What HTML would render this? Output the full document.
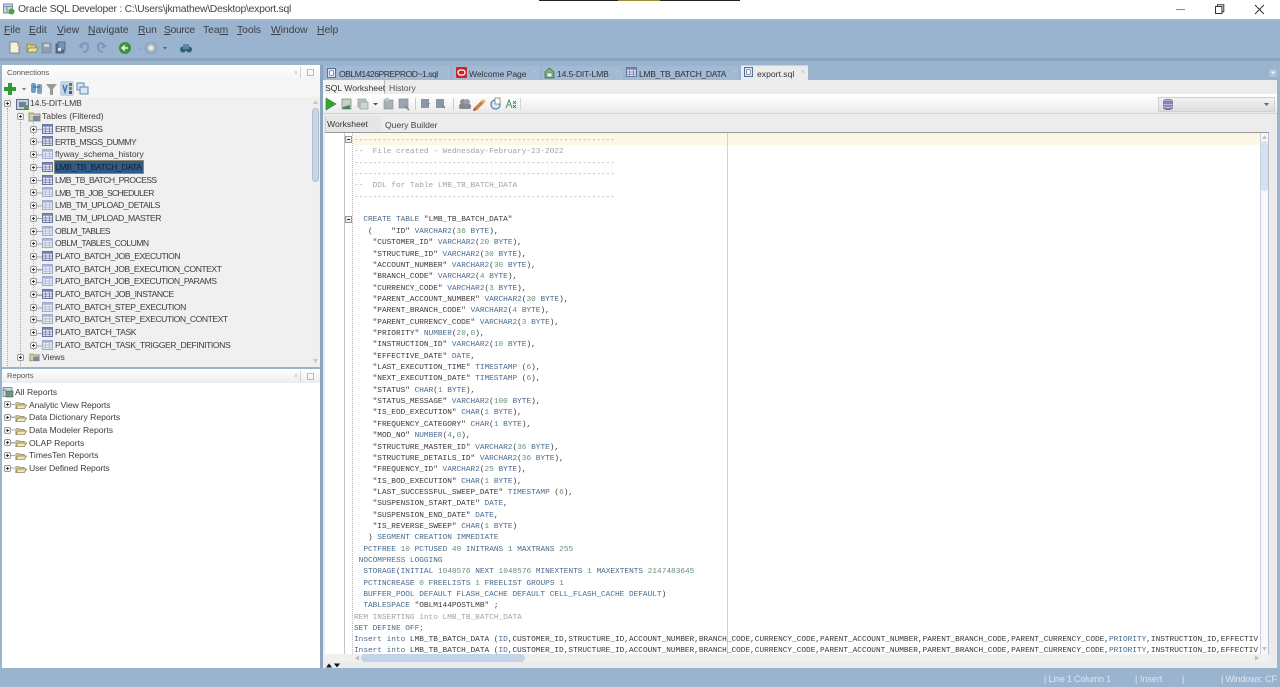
<!DOCTYPE html>
<html><head><meta charset="utf-8"><title>Oracle SQL Developer</title>
<style>
html,body{margin:0;padding:0}
body{width:1280px;height:687px;overflow:hidden;position:relative;background:#9ab3cf;font-family:"Liberation Sans",sans-serif;color:#333}
#w{position:absolute;left:0;top:0;width:1280px;height:687px;overflow:hidden;filter:blur(.3px)}
#w div,#w svg,#w span.a{position:absolute}
.t{white-space:pre;font-size:8.6px;line-height:12px;color:#3c3c3c}
.u{letter-spacing:-.48px}
.m{white-space:pre;font-size:10.3px;line-height:14px;top:24px;color:#3a3f47}
.tab{white-space:pre;font-size:8.6px;line-height:12px;top:68px;color:#333}
u{text-underline-offset:1px;text-decoration-thickness:1px}
.c{position:absolute;left:354px;margin-top:2px;white-space:pre;font:7.77px/11px "Liberation Mono",monospace;color:#383838;width:904px;overflow:hidden}
.k{color:#486a8e}.n{color:#5f8f78}.g{color:#a2a2a2}
</style></head><body><div id="w">
<svg width="0" height="0" style="left:0;top:0">
<defs>
<symbol id="tb" viewBox="0 0 12 11"><rect x=".5" y=".5" width="11" height="10" fill="#e5eaf4" stroke="#5d6c96"/><rect x="1" y="1" width="10" height="2" fill="#7684ad"/><path d="M1 5.500h10M1 8h10M4 3v7M8 3v7" stroke="#6d7ba6" stroke-width=".8"/></symbol>
<symbol id="tl" viewBox="0 0 12 11"><rect x=".5" y=".5" width="11" height="10" fill="#e9ecf6" stroke="#9aa5c6"/><rect x="1" y="1" width="10" height="2" fill="#aab4d2"/><path d="M1 5.500h10M1 8h10M4 3v7M8 3v7" stroke="#aab4d2" stroke-width=".8"/></symbol>
<symbol id="ex" viewBox="0 0 9 9"><rect x="1.500" y="1.500" width="6" height="6" rx="1.500" fill="#f4f4f4" stroke="#9a9a9a"/><path d="M3 4.500h3M4.500 3v3" stroke="#333" stroke-width=".9"/></symbol>
<symbol id="fo" viewBox="0 0 13 10"><path d="M1 9V2.500h3.500l1 1H10V9z" fill="#d9cfa0" stroke="#857c55" stroke-width=".8"/><path d="M1 9l2-4h9.500L10 9z" fill="#efe6bd" stroke="#857c55" stroke-width=".8"/></symbol>
<symbol id="sq" viewBox="0 0 10 11"><rect x=".5" y=".5" width="9" height="10" fill="#dfe6f2" stroke="#49648e"/><rect x="3" y="3" width="4" height="5" fill="#fff" stroke="#49648e" stroke-width=".7"/></symbol>
</defs></svg>

<!-- title bar -->
<div style="left:0;top:0;width:1280px;height:19px;background:#fff"></div>
<div style="left:539px;top:0;width:201px;height:1px;background:#222"></div>
<div style="left:618px;top:0;width:42px;height:1px;background:#a08a3a"></div>
<svg style="left:3px;top:3px" width="12" height="12" viewBox="0 0 12 12"><rect x=".5" y="1" width="9" height="9" fill="#c8d6e6" stroke="#7e8ea5"/><path d="M.5 3.500h9M4 3.500V10" stroke="#7e8ea5"/><circle cx="8.500" cy="8.500" r="3" fill="#4aa33c"/></svg>
<div style="left:18px;top:3px;white-space:pre;font-size:10.4px;line-height:14px;letter-spacing:-.27px;color:#444">Oracle SQL Developer : C:\Users\jkmathew\Desktop\export.sql</div>
<div style="left:1176px;top:9px;width:9px;height:1px;background:#888"></div>
<svg style="left:1214px;top:4px" width="11" height="11" viewBox="0 0 11 11" fill="none" stroke="#333"><rect x="1.500" y="2.500" width="6.500" height="7"/><path d="M3.500 2.500V.7h6.300v7H8"/></svg>
<svg style="left:1254px;top:4px" width="11" height="11" viewBox="0 0 11 11" fill="none" stroke="#333"><path d="M1 1l9 9M10 1l-9 9"/></svg>

<!-- main chrome -->
<div style="left:0;top:19px;width:1280px;height:1px;background:#a9b9ca"></div>
<div style="left:0;top:58px;width:1280px;height:3px;background:#8aa3bf"></div>
<div class="m" style="left:4px"><u>F</u>ile</div>
<div class="m" style="left:29px"><u>E</u>dit</div>
<div class="m" style="left:57px"><u>V</u>iew</div>
<div class="m" style="left:88px"><u>N</u>avigate</div>
<div class="m" style="left:138px"><u>R</u>un</div>
<div class="m" style="left:164px;letter-spacing:-.3px"><u>S</u>ource</div>
<div class="m" style="left:203px">Tea<u>m</u></div>
<div class="m" style="left:237px"><u>T</u>ools</div>
<div class="m" style="left:271px"><u>W</u>indow</div>
<div class="m" style="left:317px"><u>H</u>elp</div>

<!-- main toolbar -->
<svg style="left:8px;top:41px" width="190" height="14" viewBox="0 0 190 14">
<path d="M2 1h7l2 2v9H2z" fill="#f4f1e2" stroke="#77706a" stroke-width=".8"/><path d="M9 1l1 2 2-1-1 2 1 1-3 0z" fill="#e8b820"/>
<path d="M19 11V3h3l1 1h5v7z" fill="#d8c878" stroke="#8b7d3e" stroke-width=".8"/><path d="M19 11l2-4h9l-2 4z" fill="#ecdf9a" stroke="#8b7d3e" stroke-width=".8"/>
<rect x="34" y="2" width="9" height="10" fill="#8f9db0" stroke="#7d8a9e" stroke-width=".8"/><rect x="36" y="3" width="5" height="3" fill="#c9d1dc"/>
<rect x="48" y="3" width="8" height="9" fill="#5d6f95" stroke="#46557a" stroke-width=".8"/><rect x="50" y="1" width="7" height="8" fill="#7d8fb3" stroke="#4e5e85" stroke-width=".8"/><rect x="50" y="7" width="3" height="3" fill="#dfe5ef"/>
<path d="M73 4c3-3 7-2 7 2s-3 5-5 5M75 3l-3 2 3 2" fill="none" stroke="#8097b3" stroke-width="2"/>
<path d="M96 4c-3-3-6-2-6 2s3 5 5 5M94 3l3 2-3 2" fill="none" stroke="#8097b3" stroke-width="2"/>
<circle cx="117" cy="7" r="5.500" fill="#3d9a3a" stroke="#2e6e2c" stroke-width=".6"/><path d="M120 7h-5M117 4.500l-3 2.500 3 2.500" stroke="#e8f5e4" stroke-width="1.500" fill="none"/>
<path d="M129 6.500h4l-2 2.500z" fill="#8aa3bf"/>
<circle cx="143" cy="7" r="5.500" fill="#aab6c3" stroke="#7f8c9c" stroke-width=".6"/><circle cx="143" cy="7" r="2.500" fill="#e7ecf1"/>
<path d="M155 6h4l-2 2.500z" fill="#4d5f78"/>
<circle cx="175" cy="8.500" r="3" fill="#2f5f7d"/><circle cx="181" cy="8.500" r="3" fill="#2f5f7d"/><rect x="175" y="3" width="6" height="5" fill="#5d8aa3"/>
</svg>

<!-- panel separator -->
<div style="left:320px;top:65px;width:3px;height:603px;background:#8ea4be"></div>

<!-- Connections panel -->
<div style="left:2px;top:65px;width:318px;height:302px;background:#f0f0f0"></div>
<div style="left:2px;top:65px;width:318px;height:15px;background:linear-gradient(#fff,#f4f4f4)"></div>
<div style="left:2px;top:80px;width:318px;height:17px;background:#f6f6f6"></div>
<div class="t" style="left:7px;top:67px;font-size:7.6px;color:#555">Connections</div>
<div style="left:294px;top:70px;font-size:7px;line-height:7px;color:#b8b8b8">×</div>
<div style="left:300px;top:67px;width:1px;height:11px;background:#d0d0d0"></div>
<div style="left:307px;top:69px;width:7px;height:7px;border:1px solid #bcbcbc;box-sizing:border-box"></div>
<svg style="left:4px;top:81px" width="86" height="15" viewBox="0 0 86 15">
<path d="M4 2h4v4h4v4H8v4H4v-4H0V6h4z" fill="#2f9a2f"/>
<path d="M18 7h4l-2 2.500z" fill="#777"/>
<rect x="27" y="2" width="5" height="10" rx="2" fill="#6e9ec7"/><rect x="33" y="3" width="5" height="10" rx="2" fill="#78a3c4"/><path d="M29 6h7" stroke="#2c6a8f"/>
<path d="M42 3h11l-4 5v6h-3V8z" fill="#9a9a9a"/>
<rect x="56" y="0" width="14" height="15" rx="2" fill="#c4d4e6"/><path d="M59 4l2 7 2-7" fill="none" stroke="#3b77b5" stroke-width="1.400"/><rect x="65" y="2" width="3" height="3" fill="#3c8a3c"/><rect x="65" y="6" width="3" height="3" fill="#a8762f"/><rect x="65" y="10" width="3" height="3" fill="#555"/>
<rect x="73" y="2" width="7" height="7" fill="#dbe6f3" stroke="#5a86b8"/><rect x="76" y="6" width="8" height="7" fill="#dbe6f3" stroke="#5a86b8"/>
</svg>

<!-- tree -->
<div style="left:7px;top:108px;width:0;height:258px;border-left:1px dotted #a8a8a8"></div>
<div style="left:20px;top:122px;width:0;height:244px;border-left:1px dotted #a8a8a8"></div>
<div style="left:33px;top:122px;width:0;height:228px;border-left:1px dotted #b8b8b8"></div>
<div style="left:37px;top:129px;width:5px;height:218px;background:repeating-linear-gradient(#a8a8a8 0 1px,transparent 1px 12.75px)"></div>
<svg style="left:3px;top:99px" width="9" height="9"><use href="#ex"/></svg>
<svg style="left:16px;top:99px" width="14" height="11" viewBox="0 0 14 11"><rect x=".5" y=".5" width="12" height="10" fill="#c4cee0" stroke="#606f8e"/><rect x="3" y="3" width="7" height="5" fill="#6d7f9f"/><rect x="8" y="6" width="5" height="4" fill="#5f9a5f"/></svg>
<div class="t" style="left:30px;top:97px;letter-spacing:-.15px">14.5-DIT-LMB</div>
<svg style="left:16px;top:112px" width="9" height="9"><use href="#ex"/></svg>
<svg style="left:28px;top:111px" width="13" height="11" viewBox="0 0 13 11"><path d="M1 10V2h4l1 1h6v7z" fill="#d8cfa5" stroke="#827a5a" stroke-width=".8"/><rect x="5" y="5" width="7" height="5" fill="#7c88a8"/></svg>
<div class="t" style="left:42px;top:110px">Tables (Filtered)</div>

<div style="left:55px;top:161px;width:88px;height:12px;background:#2f5b88;outline:1px solid #8a8a6e"></div>

<svg style="left:29px;top:125px" width="9" height="9"><use href="#ex"/></svg><svg style="left:42px;top:124px" width="11" height="10"><use href="#tb"/></svg><div class="t u" style="left:55px;top:123px;letter-spacing:-.62px">ERTB_MSGS</div>
<svg style="left:29px;top:137px" width="9" height="9"><use href="#ex"/></svg><svg style="left:42px;top:136px" width="11" height="10"><use href="#tb"/></svg><div class="t u" style="left:55px;top:136px;letter-spacing:-.6px">ERTB_MSGS_DUMMY</div>
<svg style="left:29px;top:150px" width="9" height="9"><use href="#ex"/></svg><svg style="left:42px;top:149px" width="11" height="10"><use href="#tl"/></svg><div class="t" style="left:55px;top:148px">flyway_schema_history</div>
<svg style="left:29px;top:163px" width="9" height="9"><use href="#ex"/></svg><svg style="left:42px;top:162px" width="11" height="10"><use href="#tb"/></svg><div class="t u" style="left:55px;top:161px;color:#16202c;letter-spacing:-.38px">LMB_TB_BATCH_DATA</div>
<svg style="left:29px;top:176px" width="9" height="9"><use href="#ex"/></svg><svg style="left:42px;top:175px" width="11" height="10"><use href="#tb"/></svg><div class="t u" style="left:55px;top:174px;letter-spacing:-.6px">LMB_TB_BATCH_PROCESS</div>
<svg style="left:29px;top:188px" width="9" height="9"><use href="#ex"/></svg><svg style="left:42px;top:187px" width="11" height="10"><use href="#tl"/></svg><div class="t u" style="left:55px;top:187px;letter-spacing:-.7px">LMB_TB_JOB_SCHEDULER</div>
<svg style="left:29px;top:201px" width="9" height="9"><use href="#ex"/></svg><svg style="left:42px;top:200px" width="11" height="10"><use href="#tl"/></svg><div class="t u" style="left:55px;top:199px">LMB_TM_UPLOAD_DETAILS</div>
<svg style="left:29px;top:214px" width="9" height="9"><use href="#ex"/></svg><svg style="left:42px;top:213px" width="11" height="10"><use href="#tb"/></svg><div class="t u" style="left:55px;top:212px">LMB_TM_UPLOAD_MASTER</div>
<svg style="left:29px;top:227px" width="9" height="9"><use href="#ex"/></svg><svg style="left:42px;top:226px" width="11" height="10"><use href="#tl"/></svg><div class="t u" style="left:55px;top:225px;letter-spacing:-.6px">OBLM_TABLES</div>
<svg style="left:29px;top:239px" width="9" height="9"><use href="#ex"/></svg><svg style="left:42px;top:238px" width="11" height="10"><use href="#tl"/></svg><div class="t u" style="left:55px;top:237px;letter-spacing:-.55px">OBLM_TABLES_COLUMN</div>
<svg style="left:29px;top:252px" width="9" height="9"><use href="#ex"/></svg><svg style="left:42px;top:251px" width="11" height="10"><use href="#tb"/></svg><div class="t u" style="left:55px;top:250px">PLATO_BATCH_JOB_EXECUTION</div>
<svg style="left:29px;top:265px" width="9" height="9"><use href="#ex"/></svg><svg style="left:42px;top:264px" width="11" height="10"><use href="#tl"/></svg><div class="t u" style="left:55px;top:263px;letter-spacing:-.5px">PLATO_BATCH_JOB_EXECUTION_CONTEXT</div>
<svg style="left:29px;top:277px" width="9" height="9"><use href="#ex"/></svg><svg style="left:42px;top:276px" width="11" height="10"><use href="#tl"/></svg><div class="t u" style="left:55px;top:275px;letter-spacing:-.5px">PLATO_BATCH_JOB_EXECUTION_PARAMS</div>
<svg style="left:29px;top:290px" width="9" height="9"><use href="#ex"/></svg><svg style="left:42px;top:289px" width="11" height="10"><use href="#tb"/></svg><div class="t u" style="left:55px;top:288px;letter-spacing:-.46px">PLATO_BATCH_JOB_INSTANCE</div>
<svg style="left:29px;top:303px" width="9" height="9"><use href="#ex"/></svg><svg style="left:42px;top:302px" width="11" height="10"><use href="#tl"/></svg><div class="t u" style="left:55px;top:301px;letter-spacing:-.46px">PLATO_BATCH_STEP_EXECUTION</div>
<svg style="left:29px;top:315px" width="9" height="9"><use href="#ex"/></svg><svg style="left:42px;top:314px" width="11" height="10"><use href="#tl"/></svg><div class="t u" style="left:55px;top:313px;letter-spacing:-.47px">PLATO_BATCH_STEP_EXECUTION_CONTEXT</div>
<svg style="left:29px;top:328px" width="9" height="9"><use href="#ex"/></svg><svg style="left:42px;top:327px" width="11" height="10"><use href="#tb"/></svg><div class="t u" style="left:55px;top:326px;letter-spacing:-.38px">PLATO_BATCH_TASK</div>
<svg style="left:29px;top:341px" width="9" height="9"><use href="#ex"/></svg><svg style="left:42px;top:340px" width="11" height="10"><use href="#tl"/></svg><div class="t u" style="left:55px;top:339px;letter-spacing:-.42px">PLATO_BATCH_TASK_TRIGGER_DEFINITIONS</div>
<svg style="left:16px;top:353px" width="9" height="9"><use href="#ex"/></svg><svg style="left:29px;top:352px" width="11" height="10" viewBox="0 0 13 11"><path d="M1 10V2h4l1 1h6v7z" fill="#d8cfa5" stroke="#827a5a" stroke-width=".8"/><rect x="5" y="5" width="7" height="5" fill="#7c88a8"/></svg><div class="t" style="left:42px;top:351px">Views</div>

<!-- conn scrollbar -->
<div style="left:311px;top:97px;width:9px;height:269px;background:#efefef"></div>
<div style="left:312px;top:108px;width:7px;height:74px;background:#c6d6e7;border-radius:4px;border:1px solid #aebfd2;box-sizing:border-box"></div>
<svg style="left:312px;top:99px" width="7" height="6"><path d="M1 5l2.500-4L6 5z" fill="#c4c4c4"/></svg>
<svg style="left:312px;top:358px" width="7" height="6"><path d="M1 1l2.500 4L6 1z" fill="#c4c4c4"/></svg>

<!-- Reports panel -->
<div style="left:2px;top:369px;width:318px;height:299px;background:#fff"></div>
<div style="left:2px;top:369px;width:318px;height:14px;background:linear-gradient(#fff,#ececec)"></div>
<div class="t" style="left:7px;top:370px;font-size:7.6px;color:#555">Reports</div>
<div style="left:294px;top:373px;font-size:7px;line-height:7px;color:#b8b8b8">×</div>
<div style="left:300px;top:371px;width:1px;height:11px;background:#d0d0d0"></div>
<div style="left:307px;top:373px;width:7px;height:7px;border:1px solid #bcbcbc;box-sizing:border-box"></div>
<svg style="left:2px;top:386px" width="12" height="12" viewBox="0 0 12 12"><rect x="1" y="1.500" width="9" height="9" fill="#c8dbe8" stroke="#5d8095" stroke-width=".8"/><path d="M1 4h3" stroke="#5d8095"/><rect x="4" y="5" width="7" height="6" fill="#6a9a7a" stroke="#3f6a50" stroke-width=".6"/></svg>
<div class="t" style="left:15px;top:386px">All Reports</div>
<div style="left:11px;top:404px;width:4px;height:66px;background:repeating-linear-gradient(#a8a8a8 0 1px,transparent 1px 12.75px)"></div>
<svg style="left:3px;top:400px" width="9" height="9"><use href="#ex"/></svg><svg style="left:15px;top:400px" width="12" height="10"><use href="#fo"/></svg><div class="t" style="left:29px;top:399px;letter-spacing:-.1px">Analytic View Reports</div>
<svg style="left:3px;top:413px" width="9" height="9"><use href="#ex"/></svg><svg style="left:15px;top:413px" width="12" height="10"><use href="#fo"/></svg><div class="t" style="left:29px;top:411px">Data Dictionary Reports</div>
<svg style="left:3px;top:426px" width="9" height="9"><use href="#ex"/></svg><svg style="left:15px;top:426px" width="12" height="10"><use href="#fo"/></svg><div class="t" style="left:29px;top:424px">Data Modeler Reports</div>
<svg style="left:3px;top:438px" width="9" height="9"><use href="#ex"/></svg><svg style="left:15px;top:438px" width="12" height="10"><use href="#fo"/></svg><div class="t" style="left:29px;top:437px">OLAP Reports</div>
<svg style="left:3px;top:451px" width="9" height="9"><use href="#ex"/></svg><svg style="left:15px;top:451px" width="12" height="10"><use href="#fo"/></svg><div class="t" style="left:29px;top:449px">TimesTen Reports</div>
<svg style="left:3px;top:464px" width="9" height="9"><use href="#ex"/></svg><svg style="left:15px;top:464px" width="12" height="10"><use href="#fo"/></svg><div class="t" style="left:29px;top:462px;letter-spacing:-.1px">User Defined Reports</div>

<!-- Right tabs -->
<div style="left:325px;top:66px;width:125px;height:14px;background:#a3bad4"></div>
<div style="left:453px;top:66px;width:87px;height:14px;background:#a3bad4"></div>
<div style="left:542px;top:66px;width:81px;height:14px;background:#a3bad4"></div>
<div style="left:625px;top:66px;width:113px;height:14px;background:#a3bad4"></div>
<div style="left:741px;top:65px;width:67px;height:15px;background:#ececec;border-top:1px solid #e6cf86;box-sizing:border-box"></div>
<svg style="left:327px;top:68px" width="9" height="10"><use href="#sq"/></svg>
<div class="tab" style="left:339px;letter-spacing:-.5px">OBLM1426PREPROD~1.sql</div>
<div style="left:446px;top:69px;font-size:7px;line-height:7px;color:#bcd">×</div>
<svg style="left:456px;top:67px" width="11" height="11" viewBox="0 0 11 11"><rect width="11" height="11" rx="1" fill="#c8262c"/><rect x="2" y="3" width="7" height="5" rx="2.500" fill="none" stroke="#fff" stroke-width="1.300"/></svg>
<div class="tab" style="left:469px;letter-spacing:-.05px">Welcome Page</div>
<div style="left:533px;top:69px;font-size:7px;line-height:7px;color:#bcd">×</div>
<svg style="left:544px;top:67px" width="11" height="12" viewBox="0 0 11 12"><path d="M5.500 1L10 5v6H1V5z" fill="#7fb47f" stroke="#3c6e48" stroke-width=".8"/><rect x="3" y="6" width="5" height="4" fill="#e8eef2" stroke="#3c6e48" stroke-width=".5"/></svg>
<div class="tab" style="left:557px;letter-spacing:-.15px">14.5-DIT-LMB</div>
<div style="left:615px;top:69px;font-size:7px;line-height:7px;color:#bcd">×</div>
<svg style="left:626px;top:67px" width="11" height="10"><use href="#tb"/></svg>
<div class="tab" style="left:639px;letter-spacing:-.35px">LMB_TB_BATCH_DATA</div>
<div style="left:733px;top:69px;font-size:7px;line-height:7px;color:#bcd">×</div>
<svg style="left:744px;top:67px" width="9" height="10"><use href="#sq"/></svg>
<div class="tab" style="left:757px">export.sql</div>
<div style="left:801px;top:69px;font-size:7px;line-height:7px;color:#bbb">×</div>
<svg style="left:1268px;top:68px" width="10" height="10" viewBox="0 0 10 10"><rect width="10" height="10" fill="#aec2d9" stroke="#84a0be"/><path d="M2.500 3.500h5L5 6.500z" fill="#eef3f8"/></svg>

<!-- editor frame -->
<div style="left:323px;top:80px;width:954px;height:588px;background:#ececec"></div>
<div style="left:323px;top:80px;width:62px;height:15px;background:#f4f4f4;border-right:1px solid #bbb;box-sizing:border-box"></div>
<div class="tab" style="left:325px;top:82px">SQL Worksheet</div>
<div class="tab" style="left:389px;top:82px;color:#555">History</div>
<div style="left:323px;top:94px;width:954px;height:20px;background:linear-gradient(#fff,#f6f6f6 50%,#eaeaea);border-bottom:1px solid #d4d4d4;box-sizing:border-box"></div>
<svg style="left:325px;top:97px" width="200" height="14" viewBox="0 0 200 14">
<path d="M1 1l10 6-10 6z" fill="#35a335" stroke="#2a7a2a" stroke-width=".6"/>
<rect x="17" y="2" width="9" height="10" fill="#c5d1c5" stroke="#6f806f" stroke-width=".7"/><path d="M18 10l7-2v4h-7z" fill="#3c8a5a"/>
<rect x="33" y="2" width="8" height="8" fill="#b9c6c6" stroke="#8a9a9a" stroke-width=".7"/><rect x="35" y="5" width="8" height="7" fill="#ccd6d6" stroke="#8a9a9a" stroke-width=".7"/>
<path d="M48 6h5l-2.500 2.500z" fill="#555"/>
<rect x="59" y="3" width="9" height="9" fill="#a8b2b2" stroke="#8c9696" stroke-width=".7"/><rect x="60" y="1" width="4" height="3" fill="#bcc6c6"/>
<rect x="74" y="2" width="9" height="9" fill="#9aa5b0" stroke="#828d98" stroke-width=".7"/><path d="M80 9l4 4" stroke="#7a8590" stroke-width="1.500"/>
<rect x="90" y="1" width="1" height="12" fill="#ccc"/>
<rect x="96" y="2" width="8" height="9" fill="#8b97a5"/><path d="M102 6h3l-2 3z" fill="#7a8695"/>
<rect x="111" y="2" width="8" height="9" fill="#8b97a5"/><path d="M117 8l3 3" stroke="#7a8695" stroke-width="1.500"/>
<rect x="128" y="1" width="1" height="12" fill="#ccc"/>
<circle cx="138" cy="5" r="3" fill="#8b8f96"/><circle cx="142" cy="5" r="3" fill="#9a9ea5"/><rect x="134" y="7" width="12" height="5" rx="2" fill="#858992"/>
<path d="M149 11l7-7 3 2-7 7z" fill="#c9833a"/><path d="M149 11l3 2-4 1z" fill="#b83a2c"/><path d="M156 4l2-2 3 2-2 2z" fill="#dfc15a"/>
<rect x="166" y="3" width="9" height="9" rx="4" fill="#dbe7f2" stroke="#2f6aa3"/><rect x="170" y="1" width="5" height="6" fill="#fff" stroke="#555" stroke-width=".6"/>
<path d="M181 11l3-8 3 8M183 8h2" fill="none" stroke="#4f8a5f"/><path d="M188 4l3 3M191 4l-3 3M188 8l3 3M191 8l-3 3" stroke="#2f7a4f" stroke-width=".8"/>
<rect x="195" y="1" width="1" height="12" fill="#d4d4d4"/>
</svg>
<div style="left:1158px;top:97px;width:117px;height:15px;background:linear-gradient(#f2f2f2,#dedede);border:1px solid #d0d0d0;box-sizing:border-box"></div>
<svg style="left:1163px;top:99px" width="10" height="11" viewBox="0 0 10 11"><ellipse cx="5" cy="2" rx="4.500" ry="1.800" fill="#aeb0d2" stroke="#5a5c8a" stroke-width=".6"/><path d="M.5 2v7c0 1 2 1.800 4.500 1.800S9.500 10 9.500 9V2" fill="#8486b5" stroke="#5a5c8a" stroke-width=".6"/><path d="M.5 5c1 1 8 1 9 0M.5 7.500c1 1 8 1 9 0" stroke="#d4d5ea" fill="none" stroke-width=".7"/></svg>
<svg style="left:1263px;top:102px" width="7" height="5"><path d="M1 1h5L3.500 4z" fill="#666"/></svg>

<div style="left:325px;top:116px;width:56px;height:16px;background:#e6e6e6;border-left:1px solid #ccc;box-sizing:border-box"></div>
<div class="tab" style="left:327px;top:118px;color:#333">Worksheet</div>
<div class="tab" style="left:385px;top:119px;color:#444">Query Builder</div>

<!-- editor -->
<div style="left:325px;top:132px;width:944px;height:522px;background:#fff;border-top:1px solid #9a9a9a;box-sizing:border-box"></div>
<div style="left:344px;top:133px;width:1px;height:521px;background:#c4c4c4"></div>
<div style="left:353px;top:133px;width:907px;height:12px;background:#fdf7e7"></div>
<div style="left:352px;top:133px;width:0;height:521px;border-left:1px dotted #b8b8b8"></div>
<div style="left:727px;top:133px;width:1px;height:521px;background:#d2d2d2"></div>
<svg style="left:345px;top:136px" width="7" height="7"><rect x=".5" y=".5" width="6" height="6" fill="#eee" stroke="#999"/><path d="M2 3.500h3" stroke="#333"/></svg>
<svg style="left:345px;top:216px" width="7" height="7"><rect x=".5" y=".5" width="6" height="6" fill="#eee" stroke="#999"/><path d="M2 3.500h3" stroke="#333"/></svg>

<div class="c g" style="top:134px">--------------------------------------------------------</div>
<div class="c g" style="top:145px">--  File created - Wednesday-February-23-2022</div>
<div class="c g" style="top:157px">--------------------------------------------------------</div>
<div class="c g" style="top:168px">--------------------------------------------------------</div>
<div class="c g" style="top:179px">--  DDL for Table LMB_TB_BATCH_DATA</div>
<div class="c g" style="top:191px">--------------------------------------------------------</div>
<div class="c" style="top:213px">  <span class="k">CREATE TABLE</span> "LMB_TB_BATCH_DATA"</div>
<div class="c" style="top:225px">   (    "ID" <span class="k">VARCHAR2</span>(<span class="n">36</span> <span class="k">BYTE</span>),</div>
<div class="c" style="top:236px">    "CUSTOMER_ID" <span class="k">VARCHAR2</span>(<span class="n">20</span> <span class="k">BYTE</span>),</div>
<div class="c" style="top:248px">    "STRUCTURE_ID" <span class="k">VARCHAR2</span>(<span class="n">30</span> <span class="k">BYTE</span>),</div>
<div class="c" style="top:259px">    "ACCOUNT_NUMBER" <span class="k">VARCHAR2</span>(<span class="n">30</span> <span class="k">BYTE</span>),</div>
<div class="c" style="top:270px">    "BRANCH_CODE" <span class="k">VARCHAR2</span>(<span class="n">4</span> <span class="k">BYTE</span>),</div>
<div class="c" style="top:282px">    "CURRENCY_CODE" <span class="k">VARCHAR2</span>(<span class="n">3</span> <span class="k">BYTE</span>),</div>
<div class="c" style="top:293px">    "PARENT_ACCOUNT_NUMBER" <span class="k">VARCHAR2</span>(<span class="n">30</span> <span class="k">BYTE</span>),</div>
<div class="c" style="top:304px">    "PARENT_BRANCH_CODE" <span class="k">VARCHAR2</span>(<span class="n">4</span> <span class="k">BYTE</span>),</div>
<div class="c" style="top:316px">    "PARENT_CURRENCY_CODE" <span class="k">VARCHAR2</span>(<span class="n">3</span> <span class="k">BYTE</span>),</div>
<div class="c" style="top:327px">    "PRIORITY" <span class="k">NUMBER</span>(<span class="n">20</span>,<span class="n">0</span>),</div>
<div class="c" style="top:338px">    "INSTRUCTION_ID" <span class="k">VARCHAR2</span>(<span class="n">10</span> <span class="k">BYTE</span>),</div>
<div class="c" style="top:350px">    "EFFECTIVE_DATE" <span class="k">DATE</span>,</div>
<div class="c" style="top:361px">    "LAST_EXECUTION_TIME" <span class="k">TIMESTAMP</span> (<span class="n">6</span>),</div>
<div class="c" style="top:372px">    "NEXT_EXECUTION_DATE" <span class="k">TIMESTAMP</span> (<span class="n">6</span>),</div>
<div class="c" style="top:384px">    "STATUS" <span class="k">CHAR</span>(<span class="n">1</span> <span class="k">BYTE</span>),</div>
<div class="c" style="top:395px">    "STATUS_MESSAGE" <span class="k">VARCHAR2</span>(<span class="n">100</span> <span class="k">BYTE</span>),</div>
<div class="c" style="top:406px">    "IS_EOD_EXECUTION" <span class="k">CHAR</span>(<span class="n">1</span> <span class="k">BYTE</span>),</div>
<div class="c" style="top:418px">    "FREQUENCY_CATEGORY" <span class="k">CHAR</span>(<span class="n">1</span> <span class="k">BYTE</span>),</div>
<div class="c" style="top:429px">    "MOD_NO" <span class="k">NUMBER</span>(<span class="n">4</span>,<span class="n">0</span>),</div>
<div class="c" style="top:441px">    "STRUCTURE_MASTER_ID" <span class="k">VARCHAR2</span>(<span class="n">36</span> <span class="k">BYTE</span>),</div>
<div class="c" style="top:452px">    "STRUCTURE_DETAILS_ID" <span class="k">VARCHAR2</span>(<span class="n">36</span> <span class="k">BYTE</span>),</div>
<div class="c" style="top:463px">    "FREQUENCY_ID" <span class="k">VARCHAR2</span>(<span class="n">25</span> <span class="k">BYTE</span>),</div>
<div class="c" style="top:475px">    "IS_BOD_EXECUTION" <span class="k">CHAR</span>(<span class="n">1</span> <span class="k">BYTE</span>),</div>
<div class="c" style="top:486px">    "LAST_SUCCESSFUL_SWEEP_DATE" <span class="k">TIMESTAMP</span> (<span class="n">6</span>),</div>
<div class="c" style="top:497px">    "SUSPENSION_START_DATE" <span class="k">DATE</span>,</div>
<div class="c" style="top:509px">    "SUSPENSION_END_DATE" <span class="k">DATE</span>,</div>
<div class="c" style="top:520px">    "IS_REVERSE_SWEEP" <span class="k">CHAR</span>(<span class="n">1</span> <span class="k">BYTE</span>)</div>
<div class="c" style="top:531px">   ) <span class="k">SEGMENT CREATION IMMEDIATE</span></div>
<div class="c" style="top:543px">  <span class="k">PCTFREE</span> <span class="n">10</span> <span class="k">PCTUSED</span> <span class="n">40</span> <span class="k">INITRANS</span> <span class="n">1</span> <span class="k">MAXTRANS</span> <span class="n">255</span></div>
<div class="c" style="top:554px"> <span class="k">NOCOMPRESS LOGGING</span></div>
<div class="c" style="top:565px">  <span class="k">STORAGE</span>(<span class="k">INITIAL</span> <span class="n">1048576</span> <span class="k">NEXT</span> <span class="n">1048576</span> <span class="k">MINEXTENTS</span> <span class="n">1</span> <span class="k">MAXEXTENTS</span> <span class="n">2147483645</span></div>
<div class="c" style="top:577px">  <span class="k">PCTINCREASE</span> <span class="n">0</span> <span class="k">FREELISTS</span> <span class="n">1</span> <span class="k">FREELIST GROUPS</span> <span class="n">1</span></div>
<div class="c" style="top:588px">  <span class="k">BUFFER_POOL DEFAULT FLASH_CACHE DEFAULT CELL_FLASH_CACHE DEFAULT</span>)</div>
<div class="c" style="top:599px">  <span class="k">TABLESPACE</span> "OBLM144POSTLMB" ;</div>
<div class="c g" style="top:611px">REM INSERTING into LMB_TB_BATCH_DATA</div>
<div class="c k" style="top:622px">SET DEFINE OFF;</div>
<div class="c" style="top:633px"><span class="k">Insert into</span> LMB_TB_BATCH_DATA (<span class="k">ID</span>,CUSTOMER_ID,STRUCTURE_ID,ACCOUNT_NUMBER,BRANCH_CODE,CURRENCY_CODE,PARENT_ACCOUNT_NUMBER,PARENT_BRANCH_CODE,PARENT_CURRENCY_CODE,<span class="k">PRIORITY</span>,INSTRUCTION_ID,EFFECTIVE_DATE</div>
<div class="c" style="top:644px;height:8px"><span class="k">Insert into</span> LMB_TB_BATCH_DATA (<span class="k">ID</span>,CUSTOMER_ID,STRUCTURE_ID,ACCOUNT_NUMBER,BRANCH_CODE,CURRENCY_CODE,PARENT_ACCOUNT_NUMBER,PARENT_BRANCH_CODE,PARENT_CURRENCY_CODE,<span class="k">PRIORITY</span>,INSTRUCTION_ID,EFFECTIVE_DATE</div>

<!-- editor scrollbars -->
<div style="left:1260px;top:133px;width:9px;height:521px;background:#f6f8fb;border-left:1px solid #c8d0da;border-right:1px solid #b8c0ca;box-sizing:border-box"></div>
<div style="left:1261px;top:141px;width:7px;height:50px;background:#d4e2f0;border-radius:3px"></div>
<svg style="left:1261px;top:134px" width="7" height="6"><path d="M1 5l2.500-4L6 5z" fill="#c4c4c4"/></svg>
<svg style="left:1261px;top:646px" width="7" height="6"><path d="M1 1l2.500 4L6 1z" fill="#c4c4c4"/></svg>
<div style="left:323px;top:654px;width:946px;height:8px;background:#f0f0f0"></div>
<div style="left:361px;top:654px;width:164px;height:8px;background:#c4d4e6;border-radius:4px"></div>
<svg style="left:354px;top:655px" width="6" height="6"><path d="M5 .5L1 3l4 2.500z" fill="#bdbdbd"/></svg>
<svg style="left:1254px;top:655px" width="6" height="6"><path d="M1 .5L5 3 1 5.500z" fill="#bdbdbd"/></svg>
<div style="left:323px;top:662px;width:954px;height:6px;background:#ececec"></div>
<svg style="left:326px;top:663px" width="15" height="5"><path d="M0 4.500L3 .5l3 4zM8 .5h6l-3 4z" fill="#111"/></svg>

<!-- status bar -->
<div style="left:0;top:668px;width:1280px;height:19px;background:#9ab3cf"></div>
<div class="t" style="left:1044px;top:673px;font-size:9px;letter-spacing:-.2px;color:#dfe8f2">| Line 1 Column 1</div>
<div class="t" style="left:1135px;top:673px;font-size:9px;color:#dfe8f2">| Insert</div>
<div class="t" style="left:1182px;top:673px;font-size:9px;color:#dfe8f2">|</div>
<div class="t" style="left:1221px;top:673px;font-size:9px;letter-spacing:-.2px;color:#dfe8f2">| Windows: CF</div>
</div></body></html>
